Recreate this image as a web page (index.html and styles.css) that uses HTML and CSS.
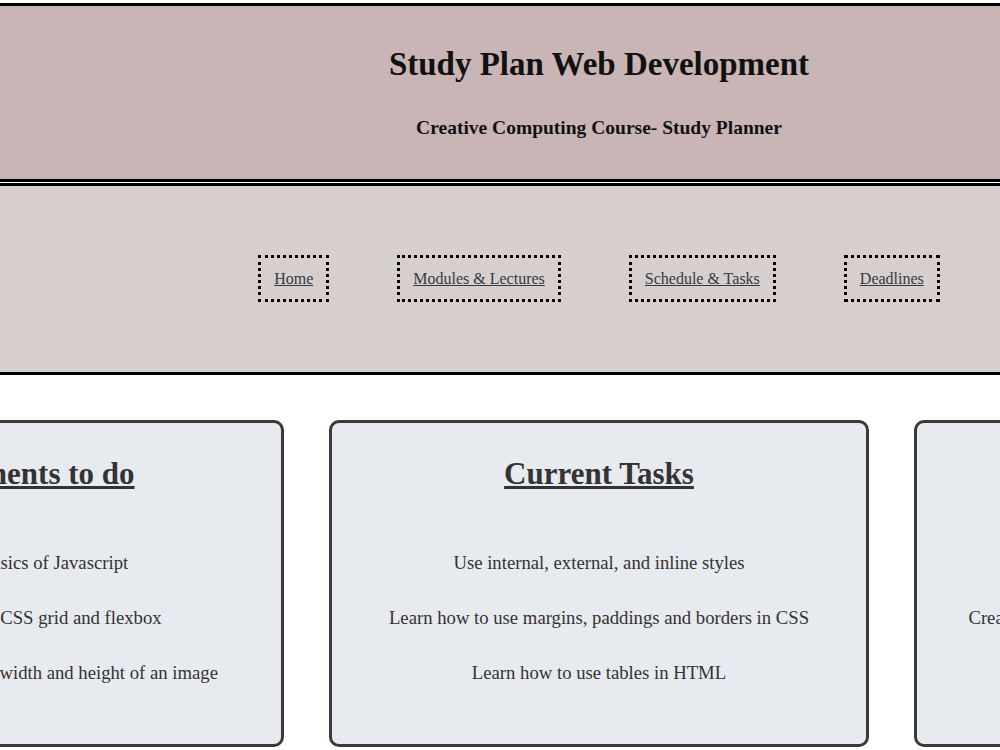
FILE: index.html
```html
<!DOCTYPE html>
<html lang="en">
<head>
    <meta charset="UTF-8">
    <meta name="viewport" content="width=device-width, initial-scale=1.0">
    <title>Study Plan Web Development</title>
    <link rel="stylesheet" href="styles.css">
</head>
<body>
    <header class="top-header">
        <h1>Study Plan Web Development</h1>
        <p class="subtitle">Creative Computing Course- Study Planner</p>
    </header>
    <nav class="main-nav">
        <a href="#">Home</a>
        <a href="#">Modules &amp; Lectures</a>
        <a href="#">Schedule &amp; Tasks</a>
        <a href="#">Deadlines</a>
    </nav>
    <main class="cards">
        <section class="card">
            <h2>Assignments to do</h2>
            <p>Revise the basics of Javascript</p>
            <p>Learn how to use CSS grid and flexbox</p>
            <p>Learn how to change the width and height of an image</p>
        </section>
        <section class="card">
            <h2>Current Tasks</h2>
            <p>Use internal, external, and inline styles</p>
            <p>Learn how to use margins, paddings and borders in CSS</p>
            <p>Learn how to use tables in HTML</p>
        </section>
        <section class="card">
            <h2>Deadlines</h2>
            <p>Submit portfolio draft</p>
            <p>Create a responsive website layout using HTML and CSS</p>
            <p>Final project review</p>
        </section>
    </main>
</body>
</html>
```
FILE: styles.css
```css
html, body {
    overflow: hidden;
}
body {
    margin: 0;
    padding-top: 3px;
    font-family: "Liberation Serif", "Times New Roman", serif;
    background-color: #ffffff;
    color: #111;
}
.top-header {
    background-color: #c9b5b5;
    border-top: 3px solid #000;
    border-bottom: 3px solid #000;
    padding: 40px 0 40px 198px;
    text-align: center;
}
.top-header h1 {
    margin: 0;
    font-size: 33px;
    line-height: 37px;
}
.subtitle {
    margin: 34px 0 0;
    font-size: 19.5px;
    line-height: 22px;
    font-weight: bold;
}
.main-nav {
    background-color: #d7cfce;
    border-top: 3px solid #000;
    border-bottom: 3px solid #000;
    margin-top: 1px;
    padding: 69px 0 70px 198px;
    display: flex;
    justify-content: center;
    gap: 68px;
}
.main-nav a {
    display: block;
    border: 3px dotted #000;
    padding: 12px 13px;
    font-size: 16px;
    line-height: 17px;
    color: #333a44;
}
.cards {
    margin-top: 45px;
    padding-left: 198px;
    display: flex;
    justify-content: center;
    gap: 45px;
}
.card {
    flex: 0 0 540px;
    box-sizing: border-box;
    height: 327px;
    background-color: #e7eaee;
    border: 3px solid #3a3a3a;
    border-radius: 10px;
    padding: 32px 20px;
    text-align: center;
    color: #333;
}
.card h2 {
    margin: 0 0 61px;
    font-size: 31px;
    line-height: 37px;
    text-decoration: underline;
}
.card p {
    margin: 0 0 35px;
    font-size: 18.7px;
    line-height: 20px;
}
```
